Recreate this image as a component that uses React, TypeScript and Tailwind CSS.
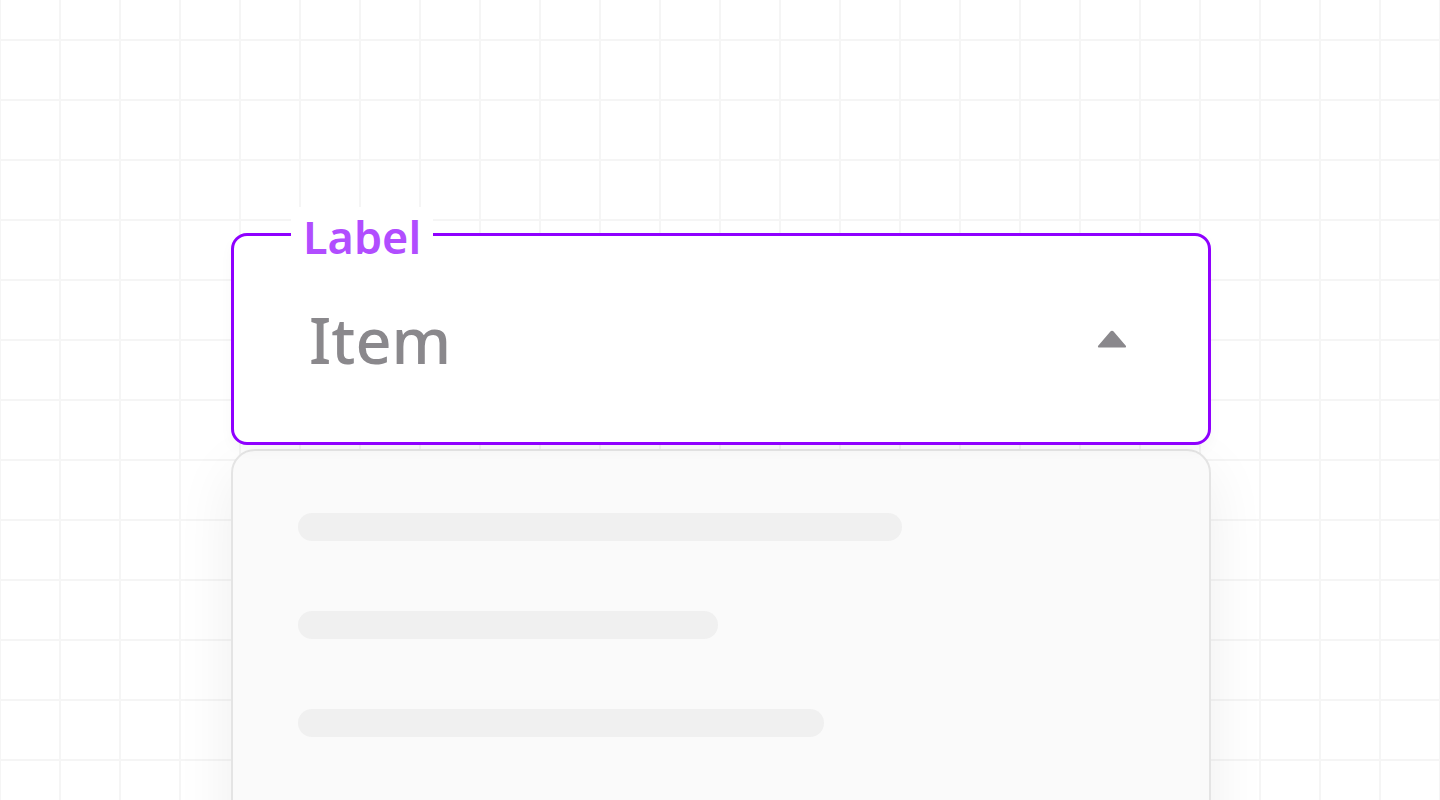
import React from 'react'

const bars = ['w-[604px]', 'w-[420px]', 'w-[526px]']

export default function App() {
  return (
    <div
      className="relative h-[800px] w-[1440px] overflow-hidden bg-white bg-[linear-gradient(to_right,#f5f5f5_2px,transparent_2px),linear-gradient(to_bottom,#f5f5f5_2px,transparent_2px)] bg-[size:60px_60px] bg-[position:59px_39px]"
      style={{ fontFamily: '"Noto Sans", sans-serif' }}
    >
      <div className="ml-[231px] w-[980px] pt-[233px]">
        {/* Select field */}
        <div className="relative flex h-[212px] items-center justify-between rounded-2xl border-[3px] border-[#8f00ff] bg-white pl-[75px] pr-[81px] shadow-[0_6px_14px_rgba(0,0,0,0.03)]">
          <span className="absolute left-[57px] top-[-29px] bg-white px-3 text-[45px] font-semibold leading-[60px] text-[#b14dff]">
            Label
          </span>
          <span className="text-[63px] font-medium leading-none text-[#8a888c]">Item</span>
          <svg width="30" height="18" viewBox="0 0 30 18">
            <path d="M13.4 1.6a2 2 0 0 1 3.2 0l12.2 14.2c.6.7.1 1.7-.8 1.7H2c-.9 0-1.4-1-.8-1.7Z" fill="#8a888c" />
          </svg>
        </div>

        {/* Dropdown panel */}
        <div className="mt-[4px] h-[420px] rounded-[24px] border-2 border-[#e4e4e4] bg-[#fafafa] pl-[65px] pt-[62px] shadow-[0_20px_60px_rgba(0,0,0,0.07)]">
          <div className="flex flex-col gap-[70px]">
            {bars.map((w, i) => (
              <div key={i} className={`h-[28px] rounded-full bg-[#f0f0f0] ${w}`} />
            ))}
          </div>
        </div>
      </div>
    </div>
  )
}
